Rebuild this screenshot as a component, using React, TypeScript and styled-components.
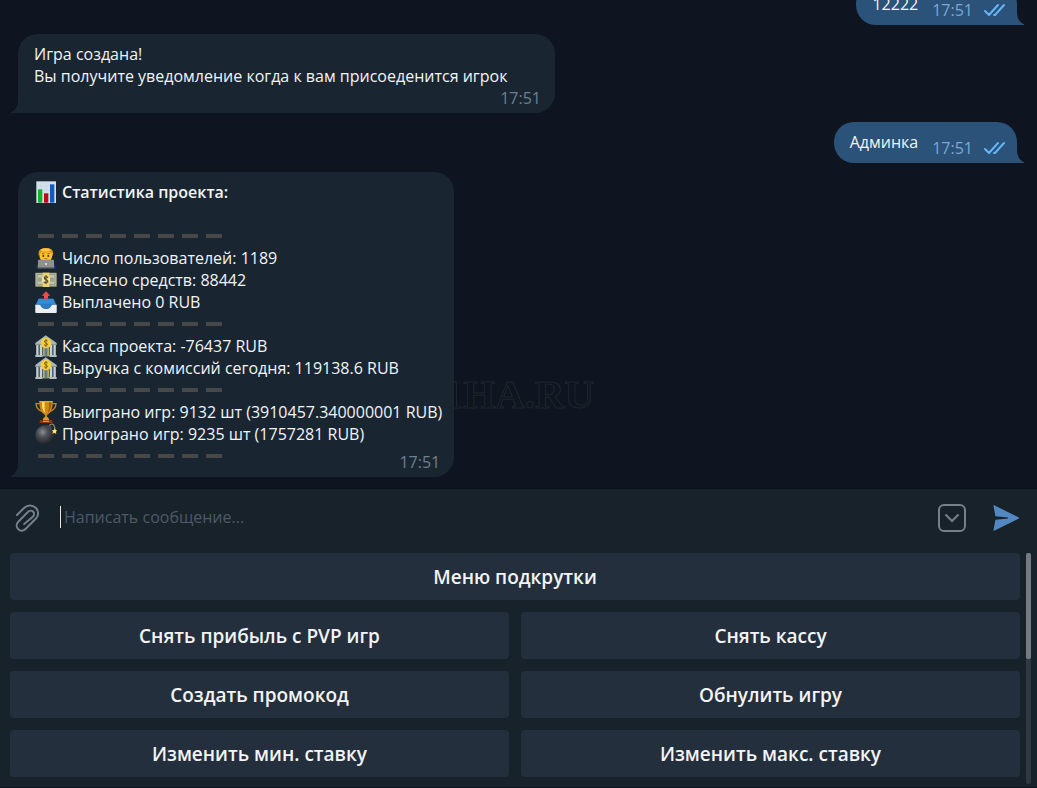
import React from "react";
import styled, { createGlobalStyle } from "styled-components";

const GlobalStyle = createGlobalStyle`
  * { box-sizing: border-box; }
  body {
    margin: 0;
    background: #0e1520;
    color: #f2f4f6;
    font: 16px/22px "Open Sans", "Noto Sans", sans-serif;
  }
  button, input { font-family: inherit; }
`;

const Page = styled.div`
  display: flex;
  flex-direction: column;
  height: 100vh;
  border-bottom: 1px solid #0e1520;
`;

const Chat = styled.main`
  flex: 1 1 0;
  min-height: 0;
  overflow: hidden;
  display: flex;
  flex-direction: column;
  justify-content: flex-end;
  gap: 9px;
  padding: 0 20px 11px 18px;
`;

const Bubble = styled.article<{ $out?: boolean; $wide?: boolean }>`
  position: relative;
  flex: none;
  display: flex;
  flex-direction: ${(p) => (p.$out ? "row" : "column")};
  align-items: flex-end;
  align-self: ${(p) => (p.$out ? "flex-end" : "flex-start")};
  gap: ${(p) => (p.$out ? "14px" : "0")};
  max-width: 100%;
  width: ${(p) => (p.$wide ? "537px" : "auto")};
  padding: ${(p) => (p.$out ? "9px 11px 4px 16px" : "9px 12px 4px 16px")};
  border-radius: ${(p) => (p.$out ? "20px 20px 0 20px" : "20px 20px 20px 0")};
  background: ${(p) => (p.$out ? "#2b5278" : "#192632")};
`;

const Tail = styled.svg<{ $out?: boolean }>`
  position: absolute;
  bottom: 0;
  left: ${(p) => (p.$out ? "100%" : "-7px")};
  fill: ${(p) => (p.$out ? "#2b5278" : "#192632")};
`;

const Text = styled.p<{ $out?: boolean }>`
  margin: 0;
  padding-bottom: ${(p) => (p.$out ? "6px" : "0")};
  align-self: stretch;
`;

const Meta = styled.span<{ $out?: boolean; $overlap?: boolean }>`
  display: flex;
  align-items: center;
  gap: 11px;
  margin-top: ${(p) => (p.$overlap ? "-16px" : "0")};
  margin-right: ${(p) => (p.$out ? "0" : "2px")};
  color: ${(p) => (p.$out ? "#7da8d3" : "#6d7f8f")};
`;

const Stats = styled.div`
  align-self: stretch;
`;

const StatsTitle = styled.h2`
  display: flex;
  gap: 4px;
  margin: 0 0 22px;
  font-size: 16px;
  line-height: 22px;
  font-weight: 600;
`;

const StatsLine = styled.div`
  display: flex;
  gap: 4px;
`;

const EmojiSvg = styled.svg`
  flex: none;
  width: 24px;
  height: 22px;
`;

const DashRow = styled.div`
  display: flex;
  align-items: center;
  gap: 8px;
  height: 22px;
  padding-left: 4px;
`;

const Dash = styled.span`
  width: 16px;
  height: 4px;
  background: #484848;
`;

const Composer = styled.form`
  flex: none;
  display: flex;
  align-items: center;
  height: 65px;
  padding: 0 17px 6px 15px;
  border-top: 1px solid #0b121a;
  background: #18222b;
`;

const IconButton = styled.button`
  flex: none;
  display: flex;
  padding: 0;
  border: 0;
  background: none;
  cursor: pointer;
`;

const MessageInput = styled.input`
  flex: 1;
  min-width: 0;
  height: 22px;
  margin: 0 20px 2px;
  padding: 0 0 0 3px;
  border: 0;
  border-left: 1px solid #f0e6dc;
  outline: 0;
  background: none;
  color: #f2f4f6;
  font-size: 16px;
  line-height: 22px;
  &::placeholder { color: #4c5a67; opacity: 1; }
`;

const SendGap = styled.div`
  display: flex;
  align-items: center;
  gap: 26px;
`;

const Keyboard = styled.section`
  flex: none;
  display: flex;
  gap: 6px;
  padding: 0 6px 3px 10px;
  background: #18222b;
`;

const Keys = styled.div`
  flex: 1;
  display: grid;
  grid-template-columns: 1fr 1fr;
  grid-auto-rows: 47px;
  gap: 12px;
  padding-bottom: 7px;
`;

const Key = styled.button<{ $full?: boolean }>`
  grid-column: ${(p) => (p.$full ? "1 / -1" : "auto")};
  padding: 0 12px;
  border: 0;
  border-radius: 4px;
  background: #242f3d;
  color: #f2f4f6;
  font-size: 19px;
  line-height: 26px;
  font-weight: 600;
  cursor: pointer;
`;

const ScrollTrack = styled.div`
  width: 5px;
  border-radius: 2px;
  background: #313842;
`;

const ScrollThumb = styled.div`
  height: 46%;
  border-radius: 2px;
  background: #777b81;
`;

const Watermark = styled.div`
  position: fixed;
  top: 50%;
  left: 50%;
  transform: translate(-50%, -50%);
  color: transparent;
  -webkit-text-stroke: 1px #20262b;
  font: bold 41px/44px "Liberation Serif", serif;
  pointer-events: none;
`;

type EmojiName = "chart" | "man" | "money" | "outbox" | "bank" | "trophy" | "bomb";

const art: Record<EmojiName, React.ReactNode> = {
  chart: (
    <>
      <rect x="4" y="1" width="59" height="65" fill="#d5e1ec" />
      <path d="M4 14H63M4 27H63M4 40H63M4 53H63M18 1V66M33 1V66M48 1V66" stroke="#bccbd8" strokeWidth="1" />
      <rect x="9" y="25" width="13" height="40" fill="#0fb52a" />
      <rect x="27" y="37" width="13" height="28" fill="#b80d18" />
      <rect x="45" y="10" width="13" height="55" fill="#0c5fc0" />
    </>
  ),
  man: (
    <>
      <path d="M5 64Q5 48 18 45H48Q61 48 61 64Z" fill="#2b36a8" />
      <path d="M13 24Q10 4 32 4Q55 4 52 24Q51 45 32 45Q14 45 13 24Z" fill="#fcc32c" />
      <path d="M12 28Q5 4 32 3Q60 3 53 28Q51 17 43 15Q30 20 20 15Q14 19 12 28Z" fill="#e39612" />
      <path d="M16 9Q32-2 48 9Q40 16 20 13Z" fill="#ffc83a" />
      <path d="M21 20L28 21M37 21L44 20" stroke="#8a5b16" strokeWidth="3" />
      <circle cx="25" cy="27" r="3" fill="#4d3216" />
      <circle cx="40" cy="27" r="3" fill="#4d3216" />
      <path d="M28 35H37" stroke="#8a4a14" strokeWidth="2" />
      <rect x="9" y="38" width="48" height="25" rx="3" fill="#8e9092" />
      <path d="M8 61H58V65H8Z" fill="#55585b" />
      <circle cx="33" cy="51" r="3" fill="#eef0f2" />
    </>
  ),
  money: (
    <>
      <rect x="1" y="11" width="64" height="43" fill="#777b67" />
      <rect x="2" y="13" width="62" height="37" fill="#c9cab0" />
      <rect x="6" y="17" width="54" height="29" fill="none" stroke="#8f9580" strokeWidth="3" />
      <circle cx="14" cy="32" r="7" fill="#9da28c" />
      <circle cx="51" cy="32" r="7" fill="#9da28c" />
      <rect x="23" y="11" width="20" height="43" fill="#ecd36b" />
      <circle cx="33" cy="32" r="12" fill="#f5e7a0" />
      <path d="M39 26Q33 20 28 25Q27 30 33 32Q40 34 38 39Q32 44 26 38M33 19V45" fill="none" stroke="#60552c" strokeWidth="4" />
    </>
  ),
  outbox: (
    <>
      <path d="M11 23H55L65 43V65H1V43Z" fill="#276dae" />
      <path d="M11 23H55L62 40H4Z" fill="#348bd6" />
      <path d="M1 41H16Q20 54 33 54Q46 54 50 41H65V63Q65 66 62 66H4Q1 66 1 63Z" fill="#eceef0" />
      <path d="M7 38H59L50 42Q45 53 33 53Q21 53 16 42Z" fill="#2d7bc2" />
      <path d="M33 1L46 14H39V23H27V14H20Z" fill="#f04c46" />
    </>
  ),
  bank: (
    <>
      <path d="M32 1L65 24V29H1V24Z" fill="#a9b8bd" />
      <path d="M3 29H63V63H3Z" fill="#52656c" />
      <path d="M7 29V63M18 29V63M48 29V63M59 29V63" stroke="#c6d1d4" strokeWidth="6" />
      <path d="M1 28H65" stroke="#8a989d" strokeWidth="3" />
      <rect x="24" y="39" width="18" height="25" fill="#b5ac52" />
      <path d="M33 39V64" stroke="#5c7c92" strokeWidth="8" />
      <path d="M1 60H23V66H1ZM43 60H65V66H43Z" fill="#b4bfc2" />
      <circle cx="33" cy="24" r="16" fill="#f5cf38" />
      <path d="M38 18Q32 13 28 18Q28 23 33 24Q39 26 37 30Q32 34 27 29M33 12V36" fill="none" stroke="#84651a" strokeWidth="3" />
    </>
  ),
  trophy: (
    <>
      <path d="M15 8H3Q4 26 23 32M50 8H63Q62 26 43 32" fill="none" stroke="#c98420" strokeWidth="4" />
      <path d="M13 1H53Q54 34 36 42V51H30V42Q12 34 13 1Z" fill="#d08a14" />
      <path d="M21 3H29Q27 20 31 37Q20 27 21 3Z" fill="#ffe16b" />
      <path d="M42 4H49Q48 27 38 36Q44 22 42 4Z" fill="#a05a08" />
      <path d="M13 2H53" stroke="#e9b944" strokeWidth="3" />
      <path d="M27 49H39L43 57H23Z" fill="#e09a2a" />
      <path d="M16 57H50L53 66H13Z" fill="#88380c" />
      <path d="M24 59H42V63H24Z" fill="#d79936" />
    </>
  ),
  bomb: (
    <>
      <defs>
        <radialGradient id="bombShade" cx="38%" cy="35%" r="65%">
          <stop offset="0" stopColor="#8b8f95" />
          <stop offset="0.4" stopColor="#4c5056" />
          <stop offset="1" stopColor="#1f2226" />
        </radialGradient>
      </defs>
      <circle cx="30" cy="36" r="29" fill="url(#bombShade)" />
      <path d="M37 6L52 13L48 22L33 15Z" fill="#43464c" />
      <path d="M43 8Q50-1 57 7Q60 12 59 20" fill="none" stroke="#8f866a" strokeWidth="4" />
      <path d="M59 15L62 20L66 22L63 27L64 33L58 30L52 32L54 26L51 21L57 21Z" fill="#f6d13b" />
      <circle cx="59" cy="25" r="4" fill="#fff08a" />
    </>
  ),
};

function Emoji({ name }: { name: EmojiName }) {
  return (
    <EmojiSvg viewBox="-3 0 72 66" aria-hidden="true">
      {art[name]}
    </EmojiSvg>
  );
}

function BubbleTail({ out }: { out?: boolean }) {
  return (
    <Tail $out={out} width="7" height="13" viewBox="0 0 7 13" aria-hidden="true">
      <path d={out ? "M0 0C0 6 3 11 7 12V13H0Z" : "M7 0C7 6 4 11 0 12V13H7Z"} />
    </Tail>
  );
}

function Outgoing({ children }: { children: React.ReactNode }) {
  return (
    <Bubble $out>
      <Text $out>{children}</Text>
      <Meta $out>
        <time>17:51</time>
        <svg width="22" height="14" viewBox="0 0 22 14" fill="none" stroke="#64b5f9" strokeWidth="2" strokeLinecap="round" strokeLinejoin="round" aria-label="Прочитано">
          <path d="M1 8L5 12L14 2M10 12L11 12L20 2" />
        </svg>
      </Meta>
      <BubbleTail out />
    </Bubble>
  );
}

function Divider() {
  return (
    <DashRow role="separator">
      {Array.from({ length: 8 }, (_, i) => (
        <Dash key={i} />
      ))}
    </DashRow>
  );
}

const groups: { icon: EmojiName; text: string }[][] = [
  [
    { icon: "man", text: "Число пользователей: 1189" },
    { icon: "money", text: "Внесено средств: 88442" },
    { icon: "outbox", text: "Выплачено 0 RUB" },
  ],
  [
    { icon: "bank", text: "Касса проекта: -76437 RUB" },
    { icon: "bank", text: "Выручка с комиссий сегодня: 119138.6 RUB" },
  ],
  [
    { icon: "trophy", text: "Выиграно игр: 9132 шт (3910457.340000001 RUB)" },
    { icon: "bomb", text: "Проиграно игр: 9235 шт (1757281 RUB)" },
  ],
];

const keys = [
  "Меню подкрутки",
  "Снять прибыль с PVP игр",
  "Снять кассу",
  "Создать промокод",
  "Обнулить игру",
  "Изменить мин. ставку",
  "Изменить макс. ставку",
];

export default function App() {
  return (
    <>
      <GlobalStyle />
      <Page>
        <Chat>
          <Outgoing>12222</Outgoing>
          <Bubble $wide>
            <Text>
              Игра создана!
              <br />
              Вы получите уведомление когда к вам присоеденится игрок
            </Text>
            <Meta>
              <time>17:51</time>
            </Meta>
            <BubbleTail />
          </Bubble>
          <Outgoing>Админка</Outgoing>
          <Bubble>
            <Stats>
              <StatsTitle>
                <Emoji name="chart" />
                Статистика проекта:
              </StatsTitle>
              <Divider />
              {groups.map((group, i) => (
                <React.Fragment key={i}>
                  {group.map((line) => (
                    <StatsLine key={line.text}>
                      <Emoji name={line.icon} />
                      {line.text}
                    </StatsLine>
                  ))}
                  <Divider />
                </React.Fragment>
              ))}
            </Stats>
            <Meta $overlap>
              <time>17:51</time>
            </Meta>
            <BubbleTail />
          </Bubble>
        </Chat>
        <Composer onSubmit={(e) => e.preventDefault()}>
          <IconButton type="button" aria-label="Прикрепить файл">
            <svg width="25" height="28" viewBox="0 0 25 28" fill="none" stroke="#74808a" strokeWidth="2" strokeLinecap="round">
              <path d="M2 11L9.3 3.7C12.5.6 17.5.6 20.7 3.7C24 7 23.8 11.5 21 14.5L10.5 25C8.2 27.3 5 27.1 3.2 25.1C1.2 23 1.2 19.8 3.3 17.7L12.6 8.2C14.3 6.5 16.8 6.3 18.2 7.7C19.6 9.1 19.3 11.3 17.8 12.8L9.2 20" />
            </svg>
          </IconButton>
          <MessageInput type="text" aria-label="Сообщение" placeholder="Написать сообщение..." />
          <SendGap>
            <IconButton type="button" aria-label="Клавиатура бота">
              <svg width="28" height="28" viewBox="0 0 28 28" fill="none" stroke="#74808a" strokeWidth="2" strokeLinecap="round">
                <rect x="1" y="1" width="26" height="26" rx="5" />
                <path d="M8 11L14 17L20 11" />
              </svg>
            </IconButton>
            <IconButton type="submit" aria-label="Отправить">
              <svg width="28" height="28" viewBox="0 0 28 28" fill="#5288c1">
                <path d="M1.4 1.6Q1.4.9 2.2 1.3L26.8 13.4Q27.8 14 26.8 14.6L2.2 26.7Q1.4 27.1 1.4 26.4L3.4 15.7L16 14.5V13.5L3.4 12.3Z" />
              </svg>
            </IconButton>
          </SendGap>
        </Composer>
        <Keyboard aria-label="Команды бота">
          <Keys>
            {keys.map((label, i) => (
              <Key key={label} type="button" $full={i === 0}>
                {label}
              </Key>
            ))}
          </Keys>
          <ScrollTrack>
            <ScrollThumb />
          </ScrollTrack>
        </Keyboard>
      </Page>
      <Watermark>1HA.RU</Watermark>
    </>
  );
}
